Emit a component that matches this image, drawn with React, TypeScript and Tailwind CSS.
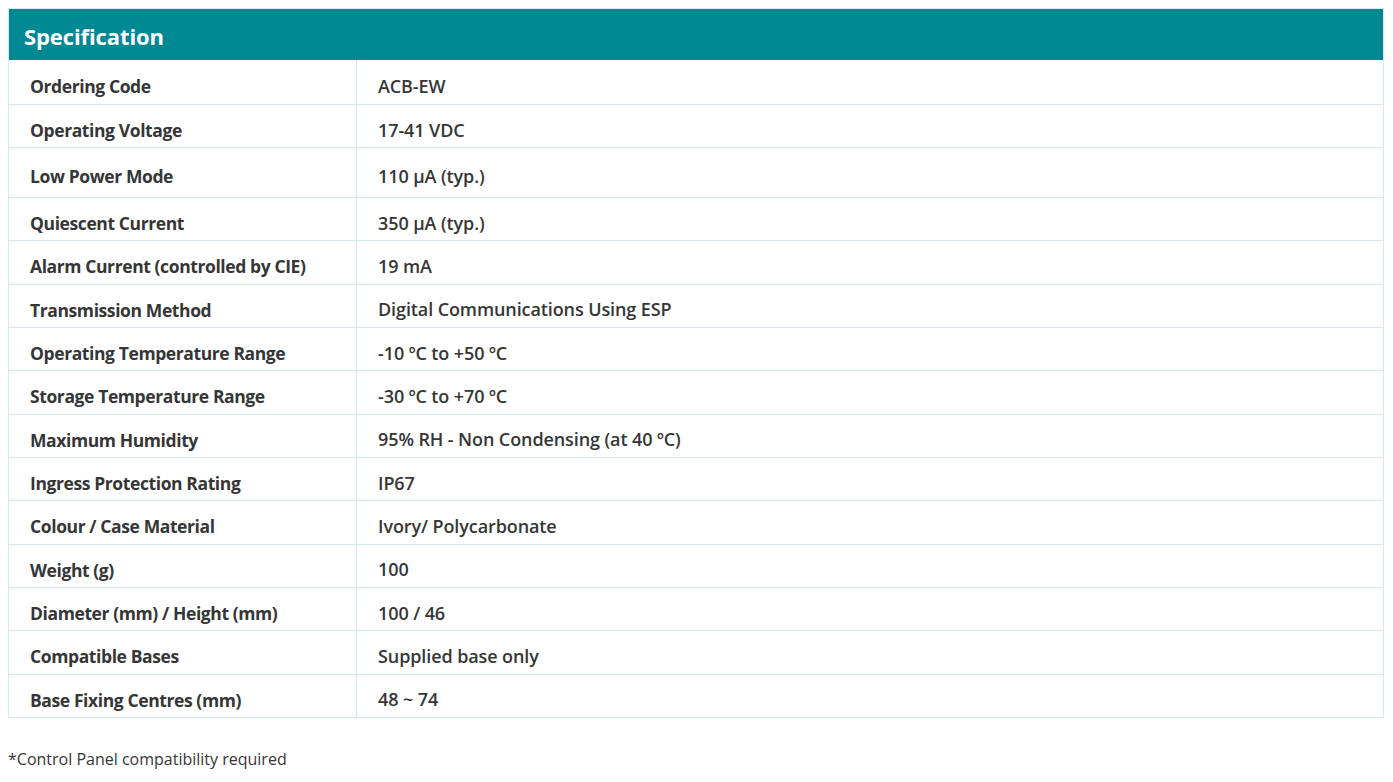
import React from "react";

const rows: [string, string, string?][] = [
  ["Ordering Code", "ACB-EW", "h-[44px]"],
  ["Operating Voltage", "17-41 VDC", "h-[43px]"],
  ["Low Power Mode", "110 µA (typ.)", "h-[50px]"],
  ["Quiescent Current", "350 µA (typ.)"],
  ["Alarm Current (controlled by CIE)", "19 mA"],
  ["Transmission Method", "Digital Communications Using ESP"],
  ["Operating Temperature Range", "-10 ºC to +50 ºC"],
  ["Storage Temperature Range", "-30 ºC to +70 ºC"],
  ["Maximum Humidity", "95% RH - Non Condensing (at 40 ºC)"],
  ["Ingress Protection Rating", "IP67"],
  ["Colour / Case Material", "Ivory/ Polycarbonate"],
  ["Weight (g)", "100"],
  ["Diameter (mm) / Height (mm)", "100 / 46"],
  ["Compatible Bases", "Supplied base only"],
  ["Base Fixing Centres (mm)", "48 ~ 74"],
];

export default function App() {
  return (
    <div
      className="w-[1393px] h-[782px] bg-white pl-[8px] pt-[8px] text-[#363636]"
      style={{ fontFamily: '"Open Sans", "Noto Sans", sans-serif' }}
    >
      <div className="w-[1376px] border border-[#d3e9ec]">
        <div className="h-[51px] bg-[#008893] flex items-center pl-[15px] pt-[4px]">
          <span className="text-white font-bold text-[22px] tracking-[-0.1px]">Specification</span>
        </div>
        {rows.map(([k, v, h], i) => (
          <div
            key={i}
            className={`flex ${h ?? "h-[43.33px]"} ${i > 0 ? "border-t border-[#d3e9ec]" : ""}`}
          >
            <div className="w-[347px] shrink-0 flex items-center pl-[21px] pt-[8px] font-bold text-[17.5px] tracking-[-0.4px]">
              {k}
            </div>
            <div className="flex-1 border-l border-[#d3e9ec] flex items-center pl-[21px] pt-[8px] font-semibold text-[18px] tracking-[-0.1px]">
              {v}
            </div>
          </div>
        ))}
      </div>
      <div className="mt-[29px] text-[16px]">*Control Panel compatibility required</div>
    </div>
  );
}
